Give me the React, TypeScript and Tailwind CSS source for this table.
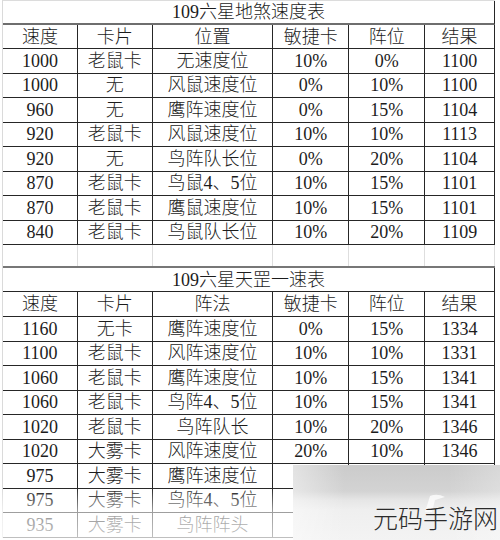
import React from "react";

const widths = ["w-[75px]", "w-[75px]", "w-[121px]", "w-[76px]", "w-[76px]", "w-[70px]"];

type Row = string[];

const table1: Row[] = [
  ["1000", "老鼠卡", "无速度位", "10%", "0%", "1100"],
  ["1000", "无", "风鼠速度位", "0%", "10%", "1100"],
  ["960", "无", "鹰阵速度位", "0%", "15%", "1104"],
  ["920", "老鼠卡", "风鼠速度位", "10%", "10%", "1113"],
  ["920", "无", "鸟阵队长位", "0%", "20%", "1104"],
  ["870", "老鼠卡", "鸟鼠4、5位", "10%", "15%", "1101"],
  ["870", "老鼠卡", "鹰鼠速度位", "10%", "15%", "1101"],
  ["840", "老鼠卡", "鸟鼠队长位", "10%", "20%", "1109"],
];

const table2: Row[] = [
  ["1160", "无卡", "鹰阵速度位", "0%", "15%", "1334"],
  ["1100", "老鼠卡", "风阵速度位", "10%", "10%", "1331"],
  ["1060", "老鼠卡", "鹰阵速度位", "10%", "15%", "1341"],
  ["1060", "老鼠卡", "鸟阵4、5位", "10%", "15%", "1341"],
  ["1020", "老鼠卡", "鸟阵队长", "10%", "20%", "1346"],
  ["1020", "大雾卡", "风阵速度位", "20%", "10%", "1346"],
  ["975", "大雾卡", "鹰阵速度位", "", "", ""],
  ["975", "大雾卡", "鸟阵4、5位", "", "", ""],
  ["935", "大雾卡", "鸟阵阵头", "", "", ""],
];

const DataRow = ({ cells, height = "h-[24.5px]" }: { cells: Row; height?: string }) => (
  <div className={`flex ${height} border-b border-[#262626]`}>
    {cells.map((c, i) => (
      <div
        key={i}
        className={`${widths[i]} border-r border-[#262626] flex items-center justify-center whitespace-nowrap overflow-hidden`}
      >
        {c}
      </div>
    ))}
  </div>
);

const TitleRow = ({ title, bottom }: { title: string; bottom: string }) => (
  <div className={`flex items-center justify-center h-[24px] border-r border-[#262626] ${bottom}`}>
    {title}
  </div>
);

const App = () => {
  return (
    <div
      className="relative w-[500px] h-[540px] overflow-hidden bg-white text-[18px] font-light text-[#1c1c1c] leading-none"
      style={{ fontFamily: '"Liberation Serif", "Noto Sans CJK SC", serif' }}
    >
      <div className="ml-[2px] w-[493px] border-l border-[#dadada]">
        {/* 地煞 */}
        <div className="border-t border-[#dcdcdc]">
          <TitleRow title="109六星地煞速度表" bottom="border-b-2 border-b-[#6e6e6e]" />
        </div>
        <DataRow cells={["速度", "卡片", "位置", "敏捷卡", "阵位", "结果"]} height="h-[24px]" />
        {table1.map((r, i) => (
          <DataRow key={i} cells={r} />
        ))}

        {/* empty row */}
        <div className="flex h-[23px] border-b-2 border-[#777]">
          {widths.map((w, i) => (
            <div key={i} className={`${w} border-r border-[#dedede]`} />
          ))}
        </div>

        {/* 天罡 */}
        <TitleRow title="109六星天罡一速表" bottom="h-[23px] border-b border-b-[#262626]" />
        <DataRow cells={["速度", "卡片", "阵法", "敏捷卡", "阵位", "结果"]} height="h-[25px]" />
        {table2.map((r, i) => (
          <DataRow key={i} cells={r} />
        ))}
      </div>

      {/* fade at the bottom */}
      <div className="absolute left-0 top-[488px] w-[295px] h-[52px] bg-[linear-gradient(to_bottom,rgba(255,255,255,0)_0%,rgba(255,255,255,0.55)_45%,rgba(255,255,255,0.72)_100%)]" />

      {/* watermark banner */}
      <div className="absolute left-[293px] top-[465px] right-0 bottom-0 overflow-hidden bg-[linear-gradient(to_bottom,#cbcbcb_0%,#d3d3d3_35%,#e6e6e6_47%,#efefef_60%,#f3f3f3_100%)]">
        <div className="absolute inset-0 bg-[linear-gradient(to_right,rgba(255,255,255,0.45)_0%,rgba(255,255,255,0)_25%,rgba(255,255,255,0)_75%,rgba(255,255,255,0.25)_100%)]" />
        <svg className="absolute left-[128px] top-[27px]" width="26" height="22" viewBox="0 0 26 22">
          <path d="M4 20 L9 4 Q16 1 24 5 L14 8 L11 20 Z" fill="white" opacity="0.75" />
        </svg>
        <div
          className="absolute left-[80px] top-[40px] text-[25px] font-light text-[#2b2b2b] whitespace-nowrap leading-none"
          style={{ fontFamily: '"Noto Sans CJK SC", sans-serif' }}
        >
          元码手游网
        </div>
      </div>
    </div>
  );
};

export default App;
